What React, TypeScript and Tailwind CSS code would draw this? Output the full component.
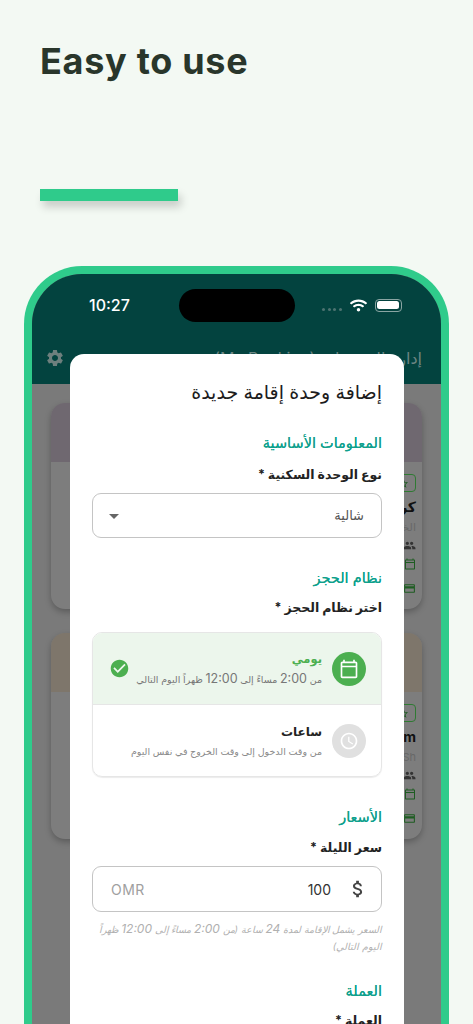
import React from "react";
import { MdSettings, MdOutlineCalendarToday, MdAccessTime, MdCheckCircle, MdAttachMoney, MdPeople, MdCreditCard, MdArrowDropDown, MdStarBorder } from "react-icons/md";
import { FaWifi } from "react-icons/fa";

const ar = "font-['Inter','DejaVu_Sans',sans-serif]";

function SectionTitle({ children, className = "" }: { children: React.ReactNode; className?: string }) {
  return <div className={`text-[14.5px] leading-[22px] text-[#10a08c] [text-shadow:0_0_0.5px_#10a08c] ${className}`}>{children}</div>;
}
function Label({ children, className = "" }: { children: React.ReactNode; className?: string }) {
  return <div className={`text-[12.5px] leading-[18px] font-bold text-[#222] ${className}`}>{children}</div>;
}
function Num({ children, className = "text-[12px]" }: { children: React.ReactNode; className?: string }) {
  return <span className={className}>{children}</span>;
}

function BgCard({ tone, top, name, sub }: { tone: string; top: string; name: string; sub: string }) {
  return (
    <div className={`mx-[19px] h-[206px] rounded-[14px] bg-[#7d7d7d] shadow-[0_3px_6px_rgba(0,0,0,0.25)] overflow-hidden ${top}`} dir="rtl">
      <div className={`h-[59px] ${tone}`} />
      <div className="pr-[6px] pt-[12px] flex flex-col items-start gap-0 text-[#1e5c22]">
        <div className="w-[26px] h-[18px] rounded-[4px] border border-[#2f7a33] flex items-center justify-center">
          <MdStarBorder size={11} />
        </div>
        <div className={`mt-[5px] text-[14px] leading-[20px] font-bold text-[#111] ${ar}`}>{name}</div>
        <div className={`mt-[1px] text-[11px] leading-[18px] text-[#686868] ${ar}`}>{sub}</div>
        <MdPeople size={13} className="mt-[3px] text-[#333]" />
        <MdOutlineCalendarToday size={12} className="mt-[6px]" />
        <MdCreditCard size={13} className="mt-[12px]" />
      </div>
    </div>
  );
}

export default function App() {
  return (
    <div className="h-[1024px] w-[473px] overflow-hidden bg-[#f3f9f3] font-['Inter',sans-serif]">
      <h1 className="pl-[40px] pt-[38px] text-[36px] leading-[46px] font-bold tracking-[0.7px] text-[#29362b]">Easy to use</h1>
      <div className="ml-[40px] mt-[105px] h-[12px] w-[138px] bg-[#2fcb8b] shadow-[3px_6px_8px_rgba(0,0,0,0.18)]" />
      <div className="relative ml-[24px] mt-[65px] h-[800px] w-[425px] rounded-t-[58px] border-x-8 border-t-8 border-[#2fcb8b] bg-[#7a7a7a] overflow-hidden">
        <div className="h-[110px] bg-[#03433f]">
          <div className="flex h-[62px] items-center">
            <div className="ml-[57px] w-[42px] text-[16px] font-medium text-white">10:27</div>
            <div className="ml-[48px] h-[33px] w-[116px] rounded-full bg-black" />
            <div className="ml-[27px] flex gap-[2.5px] pt-[8px]">
              <span className="h-[3px] w-[3px] rounded-full bg-[#4d7371]" />
              <span className="h-[3px] w-[3px] rounded-full bg-[#4d7371]" />
              <span className="h-[3px] w-[3px] rounded-full bg-[#4d7371]" />
              <span className="h-[3px] w-[3px] rounded-full bg-[#4d7371]" />
            </div>
            <FaWifi size={17} className="ml-[8px] text-white" />
            <div className="ml-[8px] flex items-center">
              <div className="h-[13px] w-[27px] rounded-[4px] border border-[#8aa5a3] p-[1.5px]">
                <div className="h-full w-full rounded-[2.5px] bg-white" />
              </div>
            </div>
          </div>
          <div className="flex items-center justify-between pl-[13px] pr-[19px] pt-[11px]">
            <MdSettings size={20} className="text-[#6d7f7d]" />
            <div className={`text-[16px] leading-[22px] text-[#6d8583] ${ar}`} dir="rtl">إدارة الحجوزات (My Booking)</div>
          </div>
        </div>

        <div className="pt-[19px]">
          <BgCard tone="bg-[#6f6870]" top="" name="كريم" sub="الخوير" />
          <BgCard tone="bg-[#7e766b]" top="mt-[24px]" name="Karam" sub="Muscat, Sh" />
        </div>

        <div dir="rtl" className={`absolute left-[38px] top-[80px] w-[334px] rounded-t-[14px] bg-white px-[22px] pt-[26px] pb-[40px] ${ar}`}>
          <div className="text-[19px] leading-[26px] text-[#1c1c1c]">إضافة وحدة إقامة جديدة</div>
          <SectionTitle className="mt-[26px]">المعلومات الأساسية</SectionTitle>
          <Label className="mt-[12px]">نوع الوحدة السكنية *</Label>
          <div className="mt-[9px] flex h-[45px] items-center justify-between rounded-[9px] border border-[#c4c4c4] pr-[17px] pl-[9px] text-[13px] text-[#555]">
            <span>شالية</span>
            <MdArrowDropDown size={24} className="text-[#666]" />
          </div>
          <SectionTitle className="mt-[29px]">نظام الحجز</SectionTitle>
          <Label className="mt-[10px]">اختر نظام الحجز *</Label>

          <div className="mt-[15px] h-[145px] overflow-hidden rounded-[10px] border border-[#e6e6e6] shadow-[0_1px_1px_rgba(0,0,0,0.08)]">
            <div className="flex h-[72px] items-center border-b border-[#e6e6e6] bg-[#ecf6ec] pr-[15px] pl-[16px]">
              <div className="flex h-[34px] w-[34px] shrink-0 items-center justify-center rounded-full bg-[#4caf50]">
                <MdOutlineCalendarToday size={20} className="text-white" />
              </div>
              <div className="mr-[10px] flex-1">
                <div className="text-[11.5px] leading-[20px] font-bold text-[#4caf50]">يومي</div>
                <div className="mt-[2px] text-[9.5px] leading-[16px] text-[#777] whitespace-nowrap">من <Num className="text-[12.5px]">2:00</Num> مساءً إلى <Num className="text-[12.5px]">12:00</Num> ظهراً اليوم التالي</div>
              </div>
              <MdCheckCircle size={21} className="shrink-0 text-[#4caf50]" />
            </div>
            <div className="flex h-[72px] items-center pr-[15px] pl-[16px]">
              <div className="flex h-[34px] w-[34px] shrink-0 items-center justify-center rounded-full bg-[#e0e0e0]">
                <MdAccessTime size={20} className="text-white" />
              </div>
              <div className="mr-[10px] flex-1">
                <div className="text-[12px] leading-[20px] font-bold text-[#222]">ساعات</div>
                <div className="mt-[2px] text-[9.5px] leading-[16px] text-[#8a8a8a] whitespace-nowrap">من وقت الدخول إلى وقت الخروج في نفس اليوم</div>
              </div>
            </div>
          </div>

          <SectionTitle className="mt-[29px]">الأسعار</SectionTitle>
          <Label className="mt-[11px]">سعر الليلة *</Label>
          <div className="mt-[9px] flex h-[46px] items-center rounded-[9px] border border-[#c4c4c4] pr-[12px] pl-[18px]">
            <MdAttachMoney size={22} className="text-[#444]" />
            <span className="mr-[16px] text-[14px] text-[#333]">100</span>
            <span className="mr-auto text-[14px] tracking-[0.5px] text-[#a0a0a0]">OMR</span>
          </div>
          <div className="mt-[8px] text-[9.5px] leading-[17px] italic text-[#b0b0b0]">السعر يشمل الإقامة لمدة <Num>24</Num> ساعة (من <Num>2:00</Num> مساءً إلى <Num>12:00</Num> ظهراً اليوم التالي)</div>
          <SectionTitle className="mt-[25px]">العملة</SectionTitle>
          <Label className="mt-[10px]">العملة *</Label>
        </div>
      </div>
    </div>
  );
}
